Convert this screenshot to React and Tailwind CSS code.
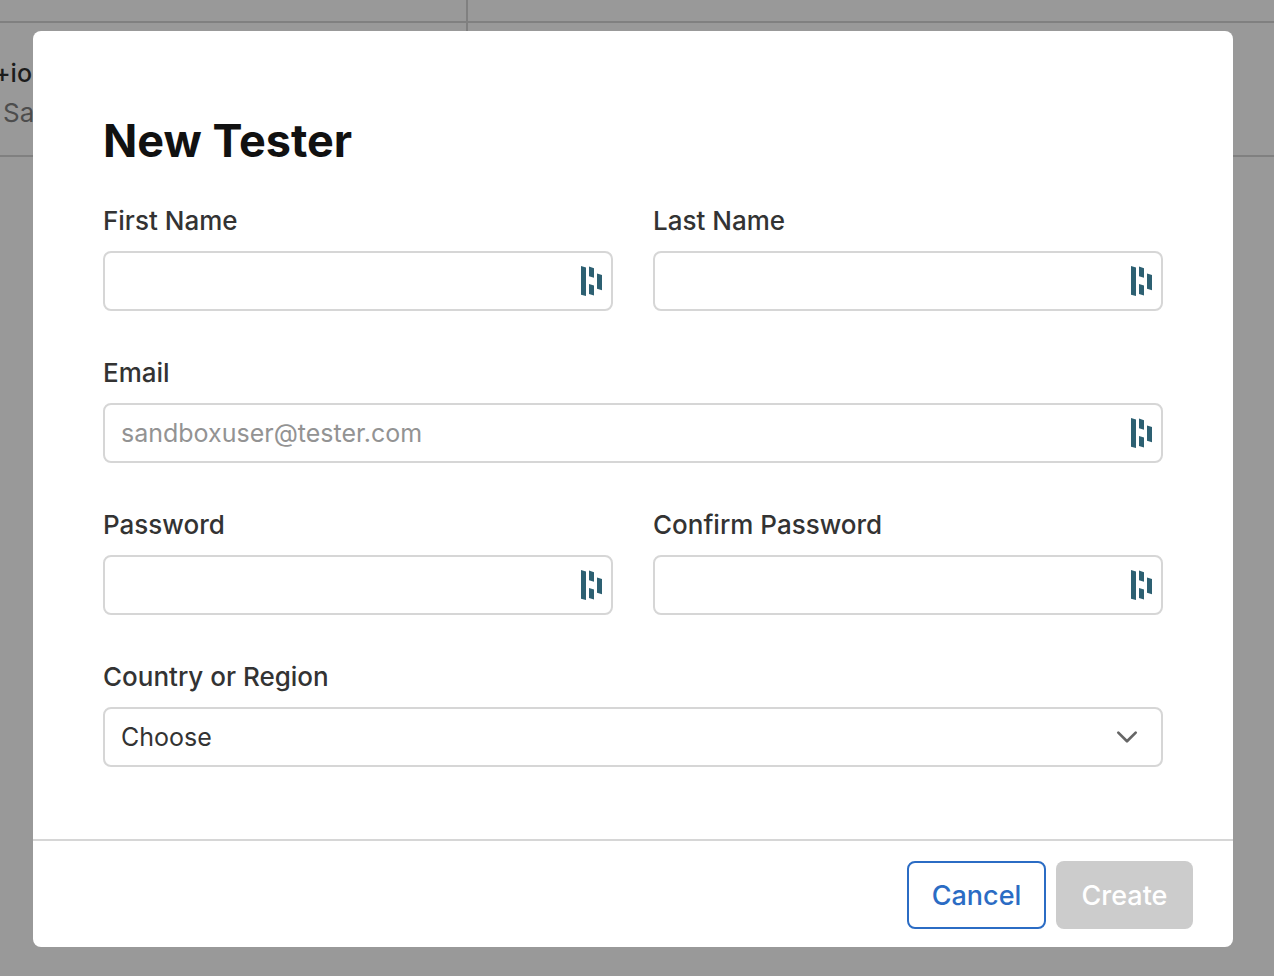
import React, { useId } from "react";

function FieldMark() {
  return (
    <svg
      aria-hidden="true"
      viewBox="0 0 22 30"
      className="pointer-events-none absolute right-[10px] top-[15px] h-[30px] w-[22px] fill-[#2d6072]"
    >
      <path d="M0 0L5 1.4V30L0 28.7Z" />
      <path d="M8 0.6L13 2.2V11.8L8 10.2Z" />
      <path d="M8 18L13 19.5V29.4L8 27.9Z" />
      <path d="M16 7.6L21 9.1V24.3L16 22.8Z" />
    </svg>
  );
}

function TextField({ label, type = "text", placeholder, wide = false }) {
  const id = useId();
  return (
    <div className={wide ? "col-span-2" : ""}>
      <label htmlFor={id} className="block pb-3 text-[26px] leading-9 font-medium text-[#333]">
        {label}
      </label>
      <div className="relative">
        <input
          id={id}
          type={type}
          placeholder={placeholder}
          className="block h-[60px] w-full rounded-lg border-2 border-[#d6d6d6] bg-white pr-12 pl-4 text-[25px] text-[#333] placeholder:text-[#939393]"
        />
        <FieldMark />
      </div>
    </div>
  );
}

function RegionSelect() {
  const id = useId();
  return (
    <div className="col-span-2">
      <label htmlFor={id} className="block pb-3 text-[26px] leading-9 font-medium text-[#333]">
        Country or Region
      </label>
      <div className="relative">
        <select
          id={id}
          className="block h-[60px] w-full appearance-none rounded-lg border-2 border-[#d6d6d6] bg-white pt-0.5 pr-12 pl-4 text-[25px] text-[#333]"
        >
          <option>Choose</option>
        </select>
        <svg
          aria-hidden="true"
          viewBox="0 0 22 14"
          className="pointer-events-none absolute top-[23px] right-[25px] h-[14px] w-[22px] fill-none stroke-[#666]"
        >
          <path d="M2.3 2.6L11 11.2L19.7 2.6" strokeWidth="2.7" strokeLinecap="round" strokeLinejoin="round" />
        </svg>
      </div>
    </div>
  );
}

function TesterTable() {
  return (
    <table className="w-full table-fixed border-collapse">
      <tbody>
        <tr className="h-[22px] border-b-2 border-[#808080]">
          <td className="w-[467px] border-r-2 border-[#808080] p-0" />
          <td className="p-0" />
        </tr>
        <tr className="h-[134px] border-b-2 border-[#808080]">
          <td className="border-r-2 border-[#808080] px-0 pt-2 pb-0">
            <div className="flex w-8 justify-end overflow-hidden text-[25px] leading-10 font-medium text-[#1c1c1c]">
              <span>+io</span>
            </div>
            <div className="pl-[3px] text-[26px] leading-10 text-[#4d4d4d]">Sa</div>
          </td>
          <td className="p-0" />
        </tr>
      </tbody>
    </table>
  );
}

export default function App() {
  return (
    <div className="min-h-screen bg-[#999] font-['Inter',sans-serif]">
      <TesterTable />
      <div className="fixed inset-0 overflow-auto pt-[31px] pr-[41px] pb-7 pl-[33px]">
        <form
          role="dialog"
          aria-labelledby="dialog-title"
          onSubmit={(event) => event.preventDefault()}
          className="rounded-lg bg-white"
        >
          <div className="px-[70px] pt-20 pb-[72px]">
            <h1 id="dialog-title" className="pb-8 text-[45px] leading-[60px] font-bold text-[#111]">
              New Tester
            </h1>
            <div className="grid grid-cols-2 gap-x-10 gap-y-11">
              <TextField label="First Name" />
              <TextField label="Last Name" />
              <TextField label="Email" type="email" placeholder="sandboxuser@tester.com" wide />
              <TextField label="Password" type="password" />
              <TextField label="Confirm Password" type="password" />
              <RegionSelect />
            </div>
          </div>
          <div className="flex justify-end gap-[10px] border-t-2 border-[#d6d6d6] px-10 pt-5 pb-[18px]">
            <button
              type="button"
              className="h-[68px] w-[139px] rounded-lg border-2 border-[#2b6cc4] pt-0.5 text-[27px] font-medium text-[#2b6cc4]"
            >
              Cancel
            </button>
            <button
              type="submit"
              disabled
              className="h-[68px] w-[137px] rounded-lg bg-[#ccc] pt-0.5 text-[27px] font-medium text-white"
            >
              Create
            </button>
          </div>
        </form>
      </div>
    </div>
  );
}
